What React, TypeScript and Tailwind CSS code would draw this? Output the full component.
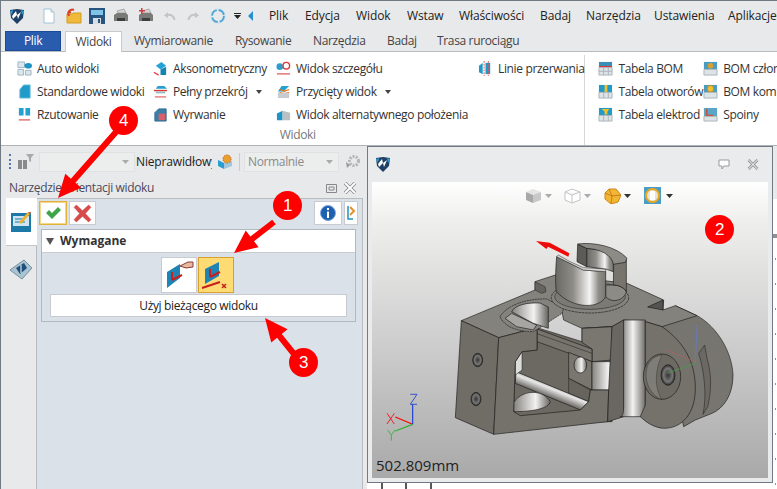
import React from 'react';

const Doc = () => (
  <svg width="12" height="16" viewBox="0 0 12 16"><path d="M1 1h7l3 3v11H1z" fill="#fff" stroke="#9fc3d6" /><path d="M8 1v3h3" fill="#e3eef4" stroke="#9fc3d6" /></svg>
);
const Logo = () => (
  <svg width="16" height="17" viewBox="0 0 16 17">
    <path d="M1 2l7-1 7 1-1 8-6 6-6-6z" fill="#1e3f66" />
    <path d="M3 8l4-5 1 4 4-3-3 7-1-4-4 4z" fill="#fff" />
    <path d="M1 3l3-1-1 5zM15 3l-3-1 1 5z" fill="#2aa0d8" />
  </svg>
);
const OpenFolder = () => (
  <svg width="16" height="16" viewBox="0 0 16 16">
    <path d="M1 6h5l1-1h8v10H1z" fill="#f0b93a" stroke="#d49a1f" />
    <path d="M2 5c1-3 4-4 6-3M2 5l3-1M2 5l1 3" fill="none" stroke="#d8402a" strokeWidth="2" />
  </svg>
);
const Save = () => (
  <svg width="16" height="16" viewBox="0 0 16 16">
    <path d="M0 0h16v16H0z" fill="#27557f" />
    <path d="M2 2h12v5H2z" fill="#7fc4e6" />
    <path d="M4 10h8v6H4z" fill="#d8dde2" />
    <path d="M9 11h2v4H9z" fill="#27557f" />
  </svg>
);
const Printer = ({ mark }: { mark?: boolean }) => (
  <svg width="16" height="16" viewBox="0 0 16 16">
    <path d="M4 3l7-2 2 4H5z" fill="#d5d5d5" stroke="#888" strokeWidth="0.6" />
    <path d="M1 7l3-2h9l2 2v6H1z" fill="#7a7a78" />
    <path d="M4 10h8v3H4z" fill="#3d3d3d" />
    {mark && <path d="M1 2h6v1.5H1zM3 0h1.5v6H3z" fill="#d83a3a" />}
  </svg>
);
const Undo = ({ flip }: { flip?: boolean }) => (
  <svg width="13" height="10" viewBox="0 0 13 10" className={flip ? '-scale-x-100' : ''}>
    <path d="M11.5 9C11 5 8 3 3.5 4" fill="none" stroke="#c4c4c4" strokeWidth="2" />
    <path d="M1 4.5L5 1v6z" fill="#c4c4c4" />
  </svg>
);
const Cycle = () => (
  <svg width="16" height="16" viewBox="0 0 16 16">
    <circle cx="8" cy="8" r="6" fill="none" stroke="#4aa3d6" strokeWidth="2" strokeDasharray="7.5 1.9" />
    <circle cx="8" cy="8" r="7.2" fill="none" stroke="#b7dcf0" strokeWidth="0.6" />
  </svg>
);

// Ribbon glyphs, all on a 16px square
const G = {
  auto: <><path d="M1 1h7v6H1zM1 9h6v6H1zM9 10h6v5H9z" fill="#d9e6ee" stroke="#9db3c0" /><ellipse cx="12" cy="5" rx="4" ry="3" fill="#1f93c4" /></>,
  std: <path d="M3 15V6l4-5h7v14z" fill="#1f9ac9" stroke="#6fbfdf" />,
  rzut: <><path d="M2 1h5v8H2zM9 1h5v8H9z" fill="#25a0d2" /><path d="M2 13h12v1.5H2z" fill="#e46a6a" /></>,
  akso: <><path d="M3 5l6-4 5 4-6 4z" fill="#27a2d6" /><path d="M8 9l6-3v9H8z" fill="#1583b4" /><path d="M1 12l5 3" stroke="#e04444" strokeWidth="1.5" /></>,
  przek: <><path d="M5 2h7l3 3H3z" fill="#2a9ed0" /><path d="M1 7h14" stroke="#d83a3a" strokeWidth="1.5" /><path d="M3 8h10v2H3z" fill="#9bb" /><path d="M2 13h12v1.5H2z" fill="#e87a7a" /></>,
  wyrw: <><path d="M2 15V6l4-4h8v13z" fill="#3a7fa8" stroke="#2d6b90" /><path d="M6 7h7v7H6z" fill="#d8606a" /></>,
  szcz: <><circle cx="4" cy="6" r="3.5" fill="#2a9ed0" /><circle cx="11" cy="5" r="3.5" fill="#fff" stroke="#d83a3a" strokeWidth="1.5" /><path d="M1 13h14v1.5H1z" fill="#e46a6a" /></>,
  przyc: <><path d="M2 8l4-6h8L8 8z" fill="#25a0d2" /><path d="M2 9h12v6H2z" fill="#c8ccce" /><path d="M4 6l10 3M4 9l10-3" stroke="#e07a2a" strokeWidth="1.2" /></>,
  alt: <><path d="M1 14V7l6-3v10z" fill="#1f93c4" /><path d="M7 4l8 2v8H7z" fill="#b9bfc3" /></>,
  linie: <><path d="M1 5l4-3v12l-4-2z" fill="#1f9ac9" /><path d="M8 2l5 0v12H8z" fill="#1f9ac9" /><path d="M6.5 0v16M11 0v16" stroke="#e05050" strokeDasharray="2 1" /></>,
  bom: <><path d="M1 1h14v5H1z" fill="#3a8fb8" /><path d="M1 6h14" stroke="#d83a3a" strokeWidth="1.5" /><path d="M1 7h14v8H1z" fill="#dde3e6" stroke="#aab4ba" /><path d="M6 7v8M11 7v8M1 11h14" stroke="#aab4ba" /></>,
  otw: <><path d="M1 1h14v8H1z" fill="#1f9ac9" /><path d="M7 1h3v8H7z" fill="#f0c030" /><path d="M1 9h14v6H1z" fill="#dde3e6" stroke="#aab4ba" /><path d="M6 9v6M11 9v6" stroke="#aab4ba" /></>,
  elek: <><path d="M1 1h14v8H1z" fill="#1f9ac9" /><path d="M4 2h8l-2 3v3H7V5z" fill="#f0c030" /><path d="M1 9h14v6H1z" fill="#dde3e6" stroke="#aab4ba" /><path d="M6 9v6M11 9v6" stroke="#aab4ba" /></>,
  czl: <><path d="M1 1h14v8H1z" fill="#4a9cc0" /><circle cx="8" cy="5" r="3" fill="#d8a030" /><path d="M1 9h14v6H1z" fill="#dde3e6" stroke="#aab4ba" /></>,
  kon: <><path d="M1 1h14v8H1z" fill="#4a9cc0" /><circle cx="8" cy="5" r="3.5" fill="#f0c030" stroke="#c08a20" /><path d="M1 9h14v6H1z" fill="#dde3e6" stroke="#aab4ba" /></>,
  spoi: <><path d="M1 1h14v9H1z" fill="#5aa6c8" /><path d="M4 2v7h7" fill="none" stroke="#c85030" strokeWidth="1.5" /><path d="M1 10h14v5H1z" fill="#dde3e6" stroke="#aab4ba" /></>,
};

const Item = ({ icon, label, caret }: { icon: React.ReactNode; label: string; caret?: boolean }) => (
  <div className="flex items-center h-[23px] gap-[5px] whitespace-nowrap">
    <svg width="15" height="15" viewBox="0 0 16 16" className="shrink-0">{icon}</svg>
    <span>{label}</span>
    {caret && <span className="ml-[3px] w-0 h-0 border-x-[3px] border-x-transparent border-t-[4px] border-t-[#444]" />}
  </div>
);

const menus: [string, string][] = [
  ['Plik', 'w-[36px]'], ['Edycja', 'w-[51px]'], ['Widok', 'w-[51px]'], ['Wstaw', 'w-[52px]'],
  ['Właściwości', 'w-[81px]'], ['Badaj', 'w-[46px]'], ['Narzędzia', 'w-[68px]'], ['Ustawienia', 'w-[74px]'], ['Aplikacje', 'w-[50px]'],
];
const tabs: [string, string][] = [
  ['Wymiarowanie', 'w-[101px]'], ['Rysowanie', 'w-[78px]'], ['Narzędzia', 'w-[74px]'], ['Badaj', 'w-[50px]'], ['Trasa rurociągu', 'w-[90px]'],
];

const ViewPart = () => (
  <svg viewBox="15 111 1188 888" className="absolute inset-0 w-full h-full">
    <defs>
      <linearGradient id="cyl" x1="0" x2="1" y1="0" y2="0">
        <stop offset="0" stopColor="#6b6964" /><stop offset="0.35" stopColor="#8f8d88" /><stop offset="0.68" stopColor="#f4f4f4" /><stop offset="0.86" stopColor="#8f8d88" /><stop offset="1" stopColor="#7a7873" />
      </linearGradient>
      <linearGradient id="col" x1="0" x2="1" y1="0" y2="0">
        <stop offset="0" stopColor="#6f6d68" /><stop offset="0.5" stopColor="#f2f2f2" /><stop offset="1" stopColor="#6f6d68" />
      </linearGradient>
      <linearGradient id="hole" x1="0" x2="1" y1="0" y2="0">
        <stop offset="0" stopColor="#85837e" /><stop offset="0.6" stopColor="#f2f2f2" /><stop offset="1" stopColor="#66645f" />
      </linearGradient>
      <linearGradient id="rib" gradientUnits="userSpaceOnUse" x1="560" y1="705" x2="540" y2="755">
        <stop offset="0" stopColor="#66645f" /><stop offset="0.5" stopColor="#e8e8e8" /><stop offset="1" stopColor="#66645f" />
      </linearGradient>
      <radialGradient id="thread"><stop offset="0" stopColor="#333" /><stop offset="0.65" stopColor="#777" /><stop offset="1" stopColor="#2a2a2a" /></radialGradient>
    </defs>
    <g stroke="#1d1d1b" strokeWidth="2" strokeLinejoin="round">
      {/* rear lug */}
      <path d="M885 545L925 482L990 512C1050 545 1095 620 1098 690C1098 750 1070 790 1035 805L985 825L950 845z" fill="#777570" />
      {/* top face */}
      <path d="M283 527L504 435L504 410L565 390L780 415L890 465L888 495L925 482L990 512L885 545L835 530L770 525L735 545L645 550L590 525L585 500L510 548L395 578z" fill="#84827d" />
      <path d="M842 486L888 465V495z" fill="#55534f" />
      <path d="M504 410L534 425L537 440L524 445L504 435z" fill="#66645f" strokeWidth="1.5" />
      {/* left face with threaded holes */}
      <path d="M283 527L395 578L380 868L265 818z" fill="#706d67" />
      <ellipse cx="332" cy="645" rx="15" ry="20" fill="url(#thread)" />
      <ellipse cx="327" cy="762" rx="15" ry="20" fill="url(#thread)" />
      {/* pocket back wall */}
      <path d="M510 548L645 590V550L735 545V830L460 830L440 800L445 650L465 620L510 615z" fill="#6c6963" />
      <path d="M645 550L735 545V645L675 650V612L645 592z" fill="#7a7771" />
      {/* slanted ledge under the boss */}
      <path d="M510 552L675 612V650L510 590z" fill="#77746e" />
      <path d="M510 566L675 625" fill="none" strokeWidth="1.5" />
      {/* block around the cross bore */}
      <path d="M605 622L675 650V735L605 700z" fill="#79766f" />
      <ellipse cx="640" cy="660" rx="19" ry="24" fill="url(#hole)" />
      <path d="M675 650H750C765 690 755 720 725 735H675z" fill="url(#hole)" />
      <path d="M605 700L670 735L665 770L605 745z" fill="#67645e" strokeWidth="1.5" />
      {/* diagonal fillet and lower bore */}
      <path d="M447 680L665 770L640 795L445 715z" fill="url(#rib)" />
      <path d="M440 772C470 730 530 735 550 770C545 790 500 800 440 800z" fill="url(#hole)" />
      <path d="M445 650L465 620V675L445 690z" fill="#dcdcda" strokeWidth="1.5" />
      {/* front face */}
      <path d="M395 578L510 548V615L465 620L445 650L440 800L460 812L640 795L665 770L670 735L725 735L722 830L380 868z" fill="#75726c" />
      {/* vertical round column */}
      <path d="M735 545L770 525V815L722 830L725 735z" fill="#6a6762" />
      <path d="M770 525H835V815H760C768 815 770 800 770 780z" fill="url(#col)" />
      {/* front lug plate */}
      <path d="M835 530L885 545C950 590 985 650 985 730C985 800 950 850 890 850C860 848 835 830 820 815L835 780z" fill="#75726c" />
      <ellipse cx="885" cy="695" rx="56" ry="68" fill="#6d6a64" />
      <path d="M845 655C825 695 845 750 885 763C865 735 860 685 885 630C868 632 855 640 845 655z" fill="#7f7d78" strokeWidth="1" />
      <ellipse cx="903" cy="690" rx="21" ry="31" fill="url(#thread)" />
      {/* slot on the lug rim */}
      <path d="M995 625L1013 600L1020 640C1035 690 1033 740 1022 785L1008 808C1020 750 1012 680 995 625z" fill="#6b6863" strokeWidth="1.5" />
      {/* rounded boss around the side bore */}
      <path d="M399 515C420 480 480 460 540 462L590 490L585 505L500 560C460 560 415 550 399 515z" fill="#85837e" strokeDasharray="6 2" />
      <path d="M414 520L449 545L499 555L509 540L434 505z" fill="#a8a6a2" />
      <path d="M434 500C444 480 479 472 519 474L544 486V550L499 535z" fill="url(#hole)" />
      {/* base ring and top cylinder */}
      <ellipse cx="669" cy="458" rx="116" ry="46" fill="#85837e" strokeDasharray="8 2" />
      <ellipse cx="669" cy="455" rx="106" ry="38" fill="#7c7a75" strokeWidth="1.5" />
      <path d="M716 455L716 420L739 420C750 420 770 425 778 440C775 460 740 480 716 455z" fill="#8d8b86" />
      <path d="M740 355L778 345V440C770 425 750 420 739 420z" fill="#77746e" />
      <path d="M569 335L609 355L649 375L716 380V455C700 490 620 495 568 440C565 420 565 380 569 335z" fill="url(#cyl)" />
      <path d="M569 335L574 330L609 350L649 368L716 372V380L649 375L609 355z" fill="#d8d8d6" strokeWidth="1.5" />
      <path d="M659 310L739 320V380L716 372L659 365z" fill="url(#cyl)" />
      <path d="M632 298L659 310V365L630 350z" fill="#5d5b56" />
      <path d="M632 297C680 290 750 305 780 340L775 352L739 358C735 330 700 312 659 310z" fill="#8d8b86" />
    </g>
    {/* red direction arrow */}
    <path d="M507 288L548 293L607 325L604 335L543 305L538 312z" fill="#f00a0a" />
    {/* origin triad on the part */}
    <path d="M985 650L898 615" stroke="#b06060" strokeWidth="2" />
    <path d="M985 655L990 540" stroke="#6a78b8" strokeWidth="3" />
    <path d="M985 655L900 685" stroke="#4a9a4a" strokeWidth="2.5" />
    {/* corner triad */}
    <path d="M137 838L85 816" stroke="#f00" strokeWidth="3.5" />
    <path d="M137 838V778" stroke="#1c3fd0" strokeWidth="3.5" />
    <path d="M137 838L85 858" stroke="#35b035" strokeWidth="3.5" />
    <path d="M60 805l22 32M82 805l-22 32" stroke="#f00" strokeWidth="2.5" fill="none" />
    <path d="M130 748h20l-20 30h20" stroke="#1c3fd0" strokeWidth="2.5" fill="none" />
    <path d="M62 855l11 15 11-15M73 870v17" stroke="#35b035" strokeWidth="2.5" fill="none" />
  </svg>
);

const Badge = ({ n, className }: { n: number; className: string }) => (
  <div className={`absolute w-[29px] h-[29px] rounded-full bg-[#fe0000] text-white flex items-center justify-center text-[17px] font-['Liberation_Sans',sans-serif] ${className}`}>{n}</div>
);

const Caret = ({ c = '#888' }: { c?: string }) => (
  <svg width="7" height="4" viewBox="0 0 7 4"><path d="M0 0h7L3.5 4z" fill={c} /></svg>
);

// Callout arrow outline from tail to tip
const arrowPoints = (x1: number, y1: number, x2: number, y2: number, head = 23, wide = 21, shaft = 6) => {
  const len = Math.hypot(x2 - x1, y2 - y1);
  const ux = (x2 - x1) / len;
  const uy = (y2 - y1) / len;
  const bx = x2 - ux * head;
  const by = y2 - uy * head;
  const at = (x: number, y: number, d: number) => `${x - uy * d},${y + ux * d}`;
  return [at(x1, y1, shaft / 2), at(bx, by, shaft / 2), at(bx, by, wide / 2), `${x2},${y2}`, at(bx, by, -wide / 2), at(bx, by, -shaft / 2), at(x1, y1, -shaft / 2)].join(' ');
};

export default function App() {
  return (
    <div className="relative w-[777px] h-[489px] overflow-hidden bg-[#e8e9ea] border-t border-l border-[#6f7a84] text-[12px] tracking-[-0.35px] text-[#333] font-['Open_Sans',sans-serif] flex flex-col">
      {/* quick access + menu bar */}
      <div className="flex items-center h-[30px] shrink-0">
        <div className="ml-[8px]"><Logo /></div>
        <div className="ml-[3px] w-px h-[12px] bg-[#aaa]" />
        <div className="ml-[15px]"><Doc /></div>
        <div className="ml-[11px]"><OpenFolder /></div>
        <div className="ml-[7px]"><Save /></div>
        <div className="ml-[8px]"><Printer /></div>
        <div className="ml-[9px]"><Printer mark /></div>
        <div className="ml-[9px]"><Undo /></div>
        <div className="ml-[11px]"><Undo flip /></div>
        <div className="ml-[10px]"><Cycle /></div>
        <div className="ml-[8px] flex flex-col items-center gap-px"><div className="w-[7px] h-px bg-[#222]" /><Caret c="#222" /></div>
        <div className="ml-[7px] w-0 h-0 border-y-[5px] border-y-transparent border-r-[5px] border-r-[#2a8fd0]" />
        <div className="ml-[16px] flex text-[#222] tracking-[-0.1px]">
          {menus.map(([m, w]) => <span key={m} className={`${w} whitespace-nowrap`}>{m}</span>)}
        </div>
      </div>

      {/* ribbon tabs */}
      <div className="flex items-end h-[21px] shrink-0 pl-[4px] border-b border-[#b9bcbf] relative">
        <div className="w-[56px] h-[20px] bg-[#2a5cae] border border-[#1a4a9a] text-white flex items-center justify-center">Plik</div>
        <div className="ml-[4px] w-[57px] h-[21px] -mb-px bg-white border-x border-t border-[#c8cacc] text-[#444] flex items-center justify-center">Widoki</div>
        <div className="ml-[12px] flex text-[#444] h-[20px] items-center">
          {tabs.map(([t, w]) => <span key={t} className={`${w} whitespace-nowrap`}>{t}</span>)}
        </div>
      </div>

      {/* ribbon panel */}
      <div className="flex h-[94px] shrink-0 bg-white border-b border-[#b0b3b6] pt-[5px] pl-[16px]">
        <div className="w-[572px] flex flex-col border-r border-[#d4d6d8] -mt-[2px] pt-[2px]">
          <div className="flex flex-1">
            <div className="w-[136px]">
              <Item icon={G.auto} label="Auto widoki" />
              <Item icon={G.std} label="Standardowe widoki" />
              <Item icon={G.rzut} label="Rzutowanie" />
            </div>
            <div className="w-[123px]">
              <Item icon={G.akso} label="Aksonometryczny" />
              <Item icon={G.przek} label="Pełny przekrój" caret />
              <Item icon={G.wyrw} label="Wyrwanie" />
            </div>
            <div className="w-[202px]">
              <Item icon={G.szcz} label="Widok szczegółu" />
              <Item icon={G.przyc} label="Przycięty widok" caret />
              <Item icon={G.alt} label="Widok alternatywnego położenia" />
            </div>
            <div><Item icon={G.linie} label="Linie przerwania" /></div>
          </div>
          <div className="h-[22px] text-center text-[#777] pr-[6px]">Widoki</div>
        </div>
        <div className="w-[122px] pl-[13px]">
          <Item icon={G.bom} label="Tabela BOM" />
          <Item icon={G.otw} label="Tabela otworów" />
          <Item icon={G.elek} label="Tabela elektrod" />
        </div>
        <div>
          <Item icon={G.czl} label="BOM człon" />
          <Item icon={G.kon} label="BOM kompon" />
          <Item icon={G.spoi} label="Spoiny" />
        </div>
      </div>

      <div className="flex flex-1 min-h-0">
        {/* left column: filter bar and orientation panel */}
        <div className="w-[366px] shrink-0 flex flex-col">
          <div className="h-[31px] shrink-0 flex items-center pl-[8px]">
            <div className="w-[2px] h-[15px] border-l-2 border-dotted border-[#5577aa]" />
            <svg width="17" height="16" viewBox="0 0 17 16" className="ml-[6px]"><path d="M1 6h4v9H1zM6 6h4v9H6z" fill="#8a8a8a" /><path d="M9 0h8l-3 4v4l-2-1V4z" fill="#aaa" /></svg>
            <div className="ml-[5px] w-[96px] h-[20px] bg-[#eceded] border border-[#e0e1e2] flex items-center justify-end pr-[5px]"><Caret c="#aaa" /></div>
            <span className="ml-[1px] w-[76px] overflow-hidden whitespace-nowrap text-[#222] tracking-[-0.15px]">Nieprawidłowy</span>
            <svg width="16" height="16" viewBox="0 0 16 16" className="ml-[5px]"><path d="M1 6l6 3v6l-6-3z" fill="#2a9ed0" /><path d="M7 9l8-2v5l-8 3z" fill="#9cc7dd" /><circle cx="10" cy="5" r="4" fill="#e8a030" stroke="#c56a20" strokeDasharray="1.5 1" /></svg>
            <div className="ml-[6px] w-px h-[18px] bg-[#ccc]" />
            <div className="ml-[4px] w-[95px] h-[20px] bg-[#eceded] border border-[#e0e1e2] flex items-center justify-between pl-[3px] pr-[5px] text-[#8a8a8a]">Normalnie<Caret c="#aaa" /></div>
            <svg width="16" height="16" viewBox="0 0 16 16" className="ml-[6px]"><circle cx="9" cy="7" r="4.5" fill="none" stroke="#b5b5b5" strokeWidth="3" strokeDasharray="2 1.2" /><path d="M1 8l4 3-3 3z" fill="#999" /></svg>
          </div>
          <div className="h-[21px] shrink-0 flex items-center pl-[8px] pr-[11px] pt-[1px] text-[#4a4a5c]">
            <span>Narzędzie orientacji widoku</span>
            <div className="ml-auto flex items-center gap-[7px]">
              <svg width="11" height="11" viewBox="0 0 11 11"><path d="M.5 1.5h10v8H.5z" fill="none" stroke="#888" /><path d="M3 4h5v3H3z" fill="none" stroke="#888" /></svg>
              <svg width="12" height="12" viewBox="0 0 12 12"><path d="M1 1l10 10M11 1L1 11" stroke="#888" strokeWidth="3.4" /><path d="M1 1l10 10M11 1L1 11" stroke="#fff" strokeWidth="1.8" /></svg>
            </div>
          </div>
          <div className="flex flex-1 min-h-0">
            {/* side tabs */}
            <div className="w-[35px] shrink-0 pl-[5px] flex flex-col">
              <div className="h-[48px] -mr-px relative z-10 bg-white border-b border-[#c4c6c8] flex items-center justify-center pr-[1px]">
                <svg width="20" height="21" viewBox="0 0 20 21"><path d="M0 2h20v19H0z" fill="#1d7aa8" /><path d="M2 5h16v10H2z" fill="#cfe6f2" /><path d="M4 8h8M4 11h10" stroke="#1d7aa8" /><path d="M8 11L17 1l2 2-9 10z" fill="#f0b030" /><path d="M17 1l2 2 1-2z" fill="#d84a2a" /></svg>
              </div>
              <div className="mt-[12px] flex justify-center">
                <svg width="24" height="22" viewBox="0 0 24 22"><path d="M1 12L15 2l8 8-10 11z" fill="#a9c4d2" stroke="#77909e" /><path d="M7 10l8-5 3 5-7 6z" fill="#1d4f78" /><path d="M12 7v8" stroke="#fff" /></svg>
              </div>
            </div>
            {/* panel body */}
            <div className="w-[327px] shrink-0 bg-[#dae1e8] border-t border-x border-[#b8bcc0] pl-[2px] pr-[4px] pt-[2px] flex flex-col">
              <div className="flex h-[24px]">
                <div className="w-[28px] bg-white border border-[#e2b23a] flex items-center justify-center shadow-[inset_0_0_0_1px_#f4d68a]">
                  <svg width="17" height="14" viewBox="0 0 17 14"><path d="M1 7l3-3 3 3 6-6 3 3-9 9z" fill="#3fa54a" /></svg>
                </div>
                <div className="ml-[2px] w-[27px] bg-white border border-[#c8ccd0] flex items-center justify-center">
                  <svg width="19" height="19" viewBox="0 0 17 17"><path d="M1 3l2-2 5.500 5 5.500-5 2 2-5 5.500 5 5.500-2 2-5.500-5-5.500 5-2-2 5-5.500z" fill="#d94a4a" stroke="#c03a3a" strokeWidth="0.5" /></svg>
                </div>
                <div className="ml-auto w-[28px] bg-white border border-[#c8ccd0] flex items-center justify-center">
                  <svg width="16" height="16" viewBox="0 0 16 16"><circle cx="8" cy="8" r="7.500" fill="#1e5fb0" stroke="#7aa6d8" /><path d="M7 3h2v2H7zM7 6.500h2V13H7z" fill="#fff" /></svg>
                </div>
                <div className="ml-[2px] w-[14px] bg-white border border-[#c8ccd0] flex items-center justify-center">
                  <svg width="9" height="16" viewBox="0 0 9 16"><path d="M1 1v13h5" fill="none" stroke="#1f93c4" strokeWidth="1.500" /><path d="M3 2l4 4-4 4" fill="none" stroke="#e89030" strokeWidth="2" /></svg>
                </div>
              </div>
              <div className="mt-[4px] ml-[2px] w-[315px] h-[93px] border border-[#b0b8c0] flex flex-col">
                <div className="h-[23px] bg-white border-b border-[#c8ccd0] flex items-center pl-[4px] font-bold text-[#333] tracking-normal">
                  <span className="w-0 h-0 border-x-[4px] border-x-transparent border-t-[7px] border-t-[#555]" />
                  <span className="ml-[6px]">Wymagane</span>
                </div>
                <div className="flex justify-center h-[37px] mt-[4px] pr-[2px]">
                  <div className="w-[36px] h-[36px] bg-white border border-[#c8ccd0] flex items-center justify-center">
                    <svg width="30" height="30" viewBox="0 0 30 30"><path d="M3 28V12l13-8v14z" fill="#1f84b4" /><path d="M8 20v-8M8 20l10-5" stroke="#c81e1e" strokeWidth="2" /><path d="M16 6l8-4h5v5l-7 1z" fill="#e8b8a0" stroke="#8a3a3a" /></svg>
                  </div>
                  <div className="w-[36px] h-[36px] ml-px bg-[#ffdb74] border border-[#d8a030] flex items-center justify-center">
                    <svg width="30" height="30" viewBox="0 0 30 30"><path d="M4 24V9l14-7v14z" fill="#1f84b4" /><path d="M9 17V9M9 17l10-5M1 28l18-6" stroke="#c81e1e" strokeWidth="2" /><path d="M21 24l4 4M25 24l-4 4" stroke="#c81e1e" strokeWidth="1.500" /></svg>
                  </div>
                </div>
                <div className="mx-[8px] h-[23px] bg-white border border-[#c8ccd0] flex items-center justify-center text-[#222]">Użyj bieżącego widoku</div>
              </div>
            </div>
          </div>
        </div>

        {/* drawing sheet behind the preview window */}
        <div className="relative flex-1 min-w-0">
          <svg width="410" height="312" className="block mt-[53px] bg-white">
            <path d="M405 36H410M405 38H410" stroke="#222" />
            {[60, 85, 110, 135, 160, 185, 210, 235, 260, 285].map((y) => <path key={y} d={`M408 ${y}h1`} stroke="#222" />)}
            <path d="M15 280V312M39 280V312M64 280V312" stroke="#222" strokeWidth="1.500" />
          </svg>
        </div>
      </div>

      {/* floating preview window */}
      <div className="absolute left-[366px] top-[145px] w-[406px] h-[337px] bg-[#e9ebed] border border-[#6f7a84] flex flex-col px-[4px] pb-[4px]">
        <div className="h-[35px] shrink-0 flex items-center pl-[3px] pr-[9px]">
          <Logo />
          <svg width="12" height="11" viewBox="0 0 12 11" className="ml-auto"><path d="M1 1h10v6H6L4 10V7H1z" fill="#fff" stroke="#999" /></svg>
          <svg width="12" height="11" viewBox="0 0 12 12" className="ml-[17px]"><path d="M1 1l10 10M11 1L1 11" stroke="#9a9a9a" strokeWidth="3" /><path d="M1 1l10 10M11 1L1 11" stroke="#fff" strokeWidth="1" /></svg>
        </div>
        <div className="relative flex-1 bg-[linear-gradient(180deg,#ffffff_0%,#f0f0ee_12%,#d4d5d4_45%,#a9a9a9_100%)] overflow-hidden">
          <ViewPart />
          <div className="absolute top-[5px] left-[153px] flex items-center">
            <svg width="17" height="16" viewBox="0 0 17 16"><path d="M1 4l7-3 8 3-8 3z" fill="#e4e4e4" /><path d="M1 4v8l7 3V7z" fill="#a8a8a8" /><path d="M8 7v8l8-3V4z" fill="#c8c8c8" /></svg>
            <span className="ml-[3px]"><Caret c="#aaa" /></span>
            <svg width="17" height="16" viewBox="0 0 17 16" className="ml-[12px]"><path d="M1 4l7-3 8 3v8l-8 3-7-3zM1 4l7 3 8-3M8 7v8" fill="#fff" stroke="#c4c4c4" /></svg>
            <span className="ml-[3px]"><Caret c="#aaa" /></span>
            <svg width="17" height="16" viewBox="0 0 17 16" className="ml-[13px]"><path d="M5 1h7l5 6-3 7-7 2-6-5V5z" fill="#f2b632" stroke="#c98a1a" /><path d="M5 1l3 7 9-1M8 8l-1 8M8 8L1 5" stroke="#b5651a" strokeWidth="0.7" fill="none" /></svg>
            <span className="ml-[3px]"><Caret c="#333" /></span>
            <svg width="17" height="17" viewBox="0 0 17 17" className="ml-[13px]"><path d="M0 0h17v17H0z" fill="#4c9cc8" /><circle cx="8.500" cy="8.500" r="6.500" fill="#e8e4d0" stroke="#e8a820" strokeWidth="2" /><path d="M6 4h5v9H6z" fill="#fff" /></svg>
            <span className="ml-[5px]"><Caret c="#333" /></span>
          </div>
          <span className="absolute left-[4px] bottom-[2px] text-[15px] tracking-normal text-[#222]">502.809mm</span>
        </div>
      </div>

      {/* callout arrows */}
      <svg width="777" height="489" className="absolute -left-px -top-px pointer-events-none">
        <polygon points={arrowPoints(116, 132, 58, 198)} fill="#fe0000" />
        <polygon points={arrowPoints(274, 222, 234, 253)} fill="#fe0000" />
        <polygon points={arrowPoints(294, 354, 265, 318)} fill="#fe0000" />
      </svg>
      <Badge n={4} className="left-[108px] top-[105px]" />
      <Badge n={1} className="left-[272px] top-[190px]" />
      <Badge n={3} className="left-[288px] top-[347px]" />
      <Badge n={2} className="left-[704px] top-[214px]" />
    </div>
  );
}
